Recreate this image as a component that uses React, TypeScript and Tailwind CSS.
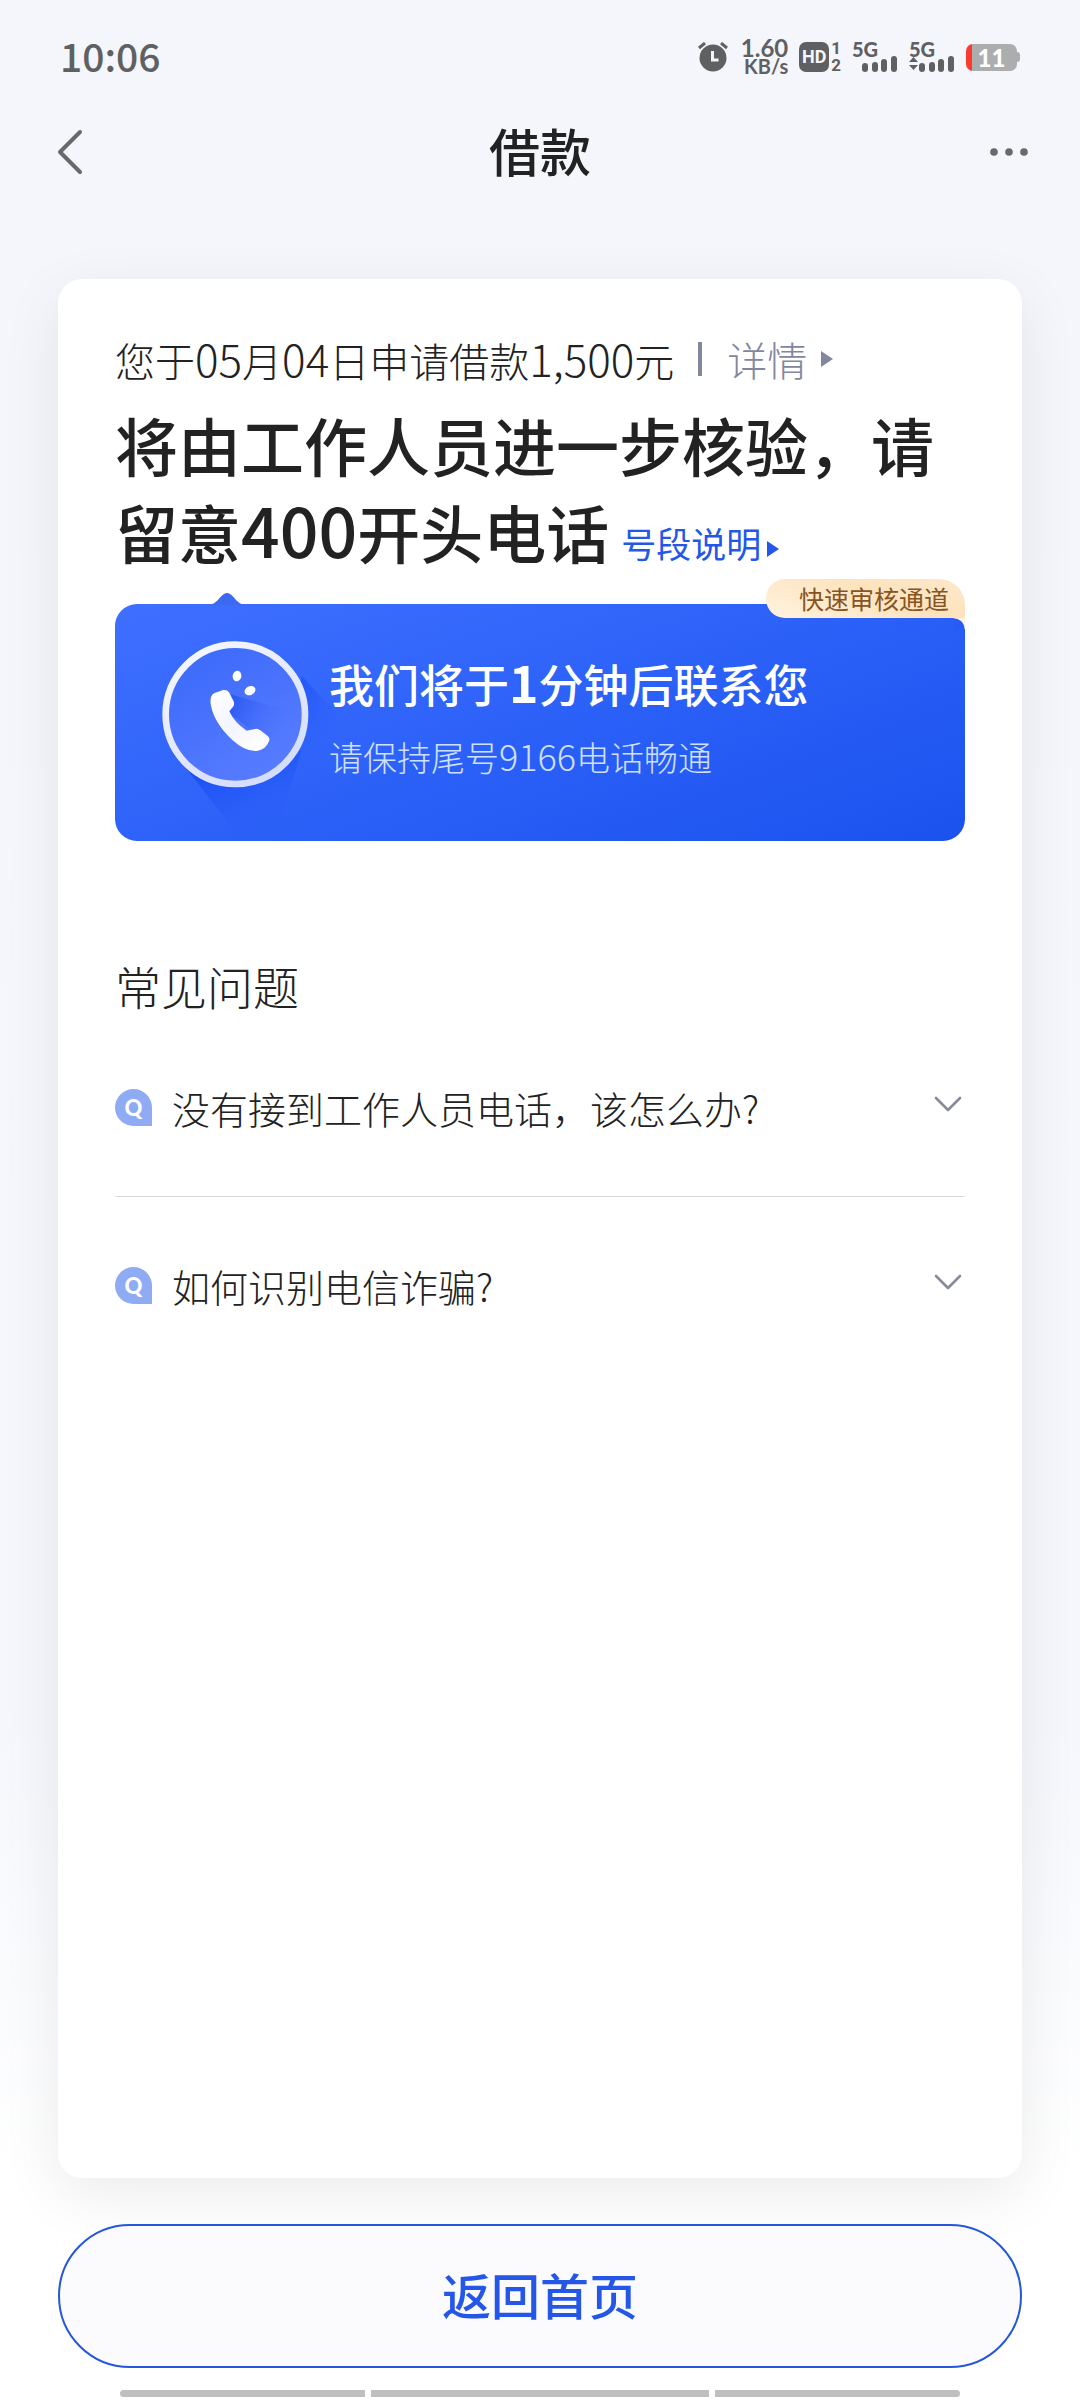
import React, { useState } from 'react';

const questions = [
  { id: 'no-call', title: '没有接到工作人员电话，该怎么办?' },
  { id: 'fraud', title: '如何识别电信诈骗?' },
];

function AlarmIcon() {
  return (
    <svg className="w-[30px] h-[30px] shrink-0" viewBox="0 0 30 30" fill="none">
      <circle cx="15" cy="16" r="13.500" fill="#5f6062" />
      <path d="M1 6 L7 1 M29 6 L23 1" stroke="#5f6062" strokeWidth="3" />
      <path d="M14.500 9 V18 H20.500" stroke="#f5f6fb" strokeWidth="3" />
    </svg>
  );
}

function HdIcon() {
  return (
    <span className="flex items-center gap-[2px]">
      <span className="flex w-[30px] h-[30px] items-center justify-center rounded-[7px] bg-[#5f6062] font-[Roboto] text-[18px] leading-[30px] font-bold text-[#f5f6fb]">
        HD
      </span>
      <span className="flex flex-col font-[Roboto] text-[17px] leading-[17px] font-bold">
        <span>1</span>
        <span>2</span>
      </span>
    </span>
  );
}

function Signal({ active }: { active?: boolean }) {
  return (
    <span className="relative h-[32px] w-[46px]">
      <span className="absolute left-0 top-0 font-[Lato] text-[20px] leading-[17px] font-black">5G</span>
      <svg className="absolute inset-0 w-[46px] h-[32px]" viewBox="0 0 46 32" fill="currentColor">
        {active && <path d="M0 21 L4.500 16 L9 21 Z M0 24 L4.500 29 L9 24 Z" />}
        <rect x="10" y="22" width="6" height="9" rx="3" />
        <rect x="20" y="21" width="6" height="10" rx="3" />
        <rect x="29" y="18" width="6" height="13" rx="3" />
        <rect x="39" y="15" width="6" height="16" rx="3" />
      </svg>
    </span>
  );
}

function Battery() {
  return (
    <span className="flex items-center">
      <span className="flex h-[27px] w-[51px] items-center justify-center rounded-[7px] bg-[linear-gradient(90deg,#fb3b2f_6px,#acadaf_6px)] font-[Lato] text-[24px] leading-[27px] font-black text-white">
        11
      </span>
      <span className="h-[10px] w-[3px] rounded-r-[3px] bg-[#acadaf]" />
    </span>
  );
}

function StatusBar() {
  return (
    <div className="flex h-[114px] items-center justify-between px-[60px] text-[#5f6062]">
      <span className="pb-[4px] text-[39px] font-medium">10:06</span>
      <div className="flex items-center gap-[11px]">
        <AlarmIcon />
        <span className="ml-[2px] flex flex-col items-end font-[Lato] text-[24px] leading-[19px] font-bold">
          <span>1.60</span>
          <span className="text-[20px]">KB/s</span>
        </span>
        <HdIcon />
        <Signal />
        <Signal active />
        <Battery />
      </div>
    </div>
  );
}

function Caret() {
  return (
    <svg className="inline-block w-[12px] h-[16px]" viewBox="0 0 12 16" fill="currentColor">
      <path d="M0 0 L12 8 L0 16 Z" />
    </svg>
  );
}

function PhoneBadge() {
  return (
    <svg className="absolute left-0 top-0 h-[237px] w-[280px]" viewBox="0 0 840 711" fill="none">
      <defs>
        <linearGradient id="shade" x1="330" y1="440" x2="450" y2="700" gradientUnits="userSpaceOnUse">
          <stop stopColor="#1547f5" stopOpacity="0.9" />
          <stop offset="1" stopColor="#2a5ff6" stopOpacity="0" />
        </linearGradient>
        <linearGradient id="shadeRight" x1="540" y1="260" x2="690" y2="400" gradientUnits="userSpaceOnUse">
          <stop stopColor="#1f52f5" stopOpacity="0.7" />
          <stop offset="1" stopColor="#2f63fa" stopOpacity="0" />
        </linearGradient>
        <linearGradient id="face" x1="250" y1="150" x2="480" y2="520" gradientUnits="userSpaceOnUse">
          <stop stopColor="#3d6bfb" />
          <stop offset="1" stopColor="#587cff" />
        </linearGradient>
        <linearGradient id="ring" x1="250" y1="130" x2="480" y2="540" gradientUnits="userSpaceOnUse">
          <stop stopColor="#f4f6ff" />
          <stop offset="1" stopColor="#d3dbfd" />
        </linearGradient>
        <linearGradient id="castShadow" x1="350" y1="280" x2="520" y2="360" gradientUnits="userSpaceOnUse">
          <stop stopColor="#2c58f0" />
          <stop offset="1" stopColor="#4d75ff" stopOpacity="0" />
        </linearGradient>
        <linearGradient id="handset" x1="300" y1="260" x2="440" y2="440" gradientUnits="userSpaceOnUse">
          <stop stopColor="#ffffff" />
          <stop offset="0.500" stopColor="#f3f5ff" />
          <stop offset="1" stopColor="#ffffff" />
        </linearGradient>
      </defs>
      <path d="M215 495 L375 700 L480 700 L560 440 Z" fill="url(#shade)" />
      <path d="M560 215 L720 390 L640 480 L520 460 Z" fill="url(#shadeRight)" />
      <circle cx="361" cy="331" r="209" fill="url(#face)" stroke="url(#ring)" strokeWidth="20" />
      <path d="M335 268 L540 325 L520 400 L462 405 L410 378 L345 330 Z" fill="url(#castShadow)" />
      <path
        d="M297 268 L325 258 Q336 256 342 265 L356 292 Q360 302 353 310 L343 322 Q358 356 395 380 L420 375 Q428 373 436 379 L458 396 Q466 402 462 412 Q452 437 426 441 Q392 444 352 408 Q296 356 287 300 Q284 275 297 268 Z"
        fill="url(#handset)"
      />
      <ellipse cx="366" cy="216" rx="13" ry="16" transform="rotate(12 366 216)" fill="#fff" />
      <ellipse cx="405" cy="260" rx="17" ry="13" transform="rotate(-28 405 260)" fill="#fff" />
    </svg>
  );
}

function CallBanner() {
  return (
    <section className="relative mt-[30px] h-[237px] rounded-[22px] bg-[linear-gradient(160deg,#3f6fff_0%,#2c61f8_50%,#1b52ee_100%)]">
      <svg className="absolute -top-[11px] left-[94px] w-[36px] h-[12px]" viewBox="0 0 36 12" fill="#3b69f2">
        <path d="M0 12 C8 11 11 3 15 1 Q18 -1 21 1 C25 3 28 11 36 12 Z" />
      </svg>
      <PhoneBadge />
      {/* cream block hides the banner's own rounded corner, the tail below it draws the smaller one */}
      <div className="absolute right-0 -top-[25px]">
        <div className="h-[39px] rounded-l-[19px] rounded-tr-[26px] bg-[linear-gradient(20deg,#fff3e0,#fde3bd_60%,#fde8ca)] pl-[33px] pr-[16px] text-[25px] leading-[38px] text-[#865523]">
          快速审核通道
        </div>
        <div className="ml-auto h-[11px] w-[11px] bg-[radial-gradient(circle_at_0_100%,#265cf5_10px,#fdf0dd_11px)]" />
      </div>
      <div className="relative pl-[214px] pt-[42px] text-white">
        <h2 className="text-[45px] leading-[70px] font-medium">
          我们将于<span className="text-[50px] font-bold">1</span>分钟后联系您
        </h2>
        <p className="mt-[11px] text-[34px] leading-[50px] font-light text-[#cfe0ff]">
          请保持尾号<span className="text-[36px]">9166</span>电话畅通
        </p>
      </div>
    </section>
  );
}

function Question({ title }: { title: string }) {
  const [open, setOpen] = useState(false);

  return (
    <li className="border-b border-[#dadbdd] last:border-0">
      <button
        type="button"
        aria-expanded={open}
        onClick={() => setOpen(!open)}
        className="flex h-[177px] w-full items-center text-left"
      >
        <span className="flex h-[37px] w-[37px] items-center justify-center rounded-full rounded-br-none bg-[#8eabf4] font-[Lato] text-[22px] leading-[37px] font-black text-white">
          Q
        </span>
        <span className="ml-[20px] flex-1 text-[38px] leading-[56px] font-light">{title}</span>
        <svg className="mr-[3px] mb-[8px] w-[28px] h-[16px]" viewBox="0 0 28 16" fill="none">
          <path d="M2 2 L14 14 L26 2" stroke="#878a98" strokeWidth="2.600" strokeLinecap="round" strokeLinejoin="round" />
        </svg>
      </button>
    </li>
  );
}

export default function App() {
  return (
    <div className="flex min-h-screen flex-col bg-[linear-gradient(180deg,#f4f6fb_0%,#f5f7fc_72%,#ffffff_91%)] font-['Noto_Sans_CJK_SC',sans-serif] text-[#222222]">
      <StatusBar />

      <header className="flex h-[76px] items-center justify-between pl-[56px] pr-[50px]">
        <button type="button" aria-label="返回" className="w-[54px]">
          <svg className="w-[28px] h-[46px]" viewBox="0 0 28 46" fill="none">
            <path d="M24 3 L4 23 L24 43" stroke="#68696b" strokeWidth="4" strokeLinecap="round" strokeLinejoin="round" />
          </svg>
        </button>
        <h1 className="pb-[3px] text-[51px] leading-[73px] font-medium">借款</h1>
        <button type="button" aria-label="更多" className="flex w-[60px] justify-end">
          <svg className="w-[40px] h-[8px]" viewBox="0 0 40 8" fill="#68696b">
            <circle cx="4" cy="4" r="3.800" />
            <circle cx="19" cy="4" r="3.800" />
            <circle cx="34" cy="4" r="3.800" />
          </svg>
        </button>
      </header>

      <main className="mx-[58px] mt-[89px] flex-1 rounded-[24px] bg-white px-[57px] pt-[49px] shadow-[0_16px_60px_rgba(0,0,0,0.08)]">
        <p className="flex items-center text-[40px] leading-[60px] font-light">
          <span>
            您于<span className="text-[44px]">05</span>月<span className="text-[44px]">04</span>日申请借款
            <span className="text-[44px]">1,500</span>元
          </span>
          <span className="ml-[24px] h-[34px] w-[4px] bg-[#83879d]" />
          <a href="#detail" className="ml-[25px] flex items-center gap-[14px] text-[#83879d]">
            详情
            <Caret />
          </a>
        </p>
        <h2 className="mt-[10px] text-[63px] leading-[87px] font-medium">
          将由工作人员进一步核验，请留意<span className="text-[68px] leading-[80px]">400</span>开头电话
          <a href="#numbers" className="ml-[12px] text-[35px] leading-[50px] font-normal text-[#2457e8]">
            号段说明
            <span className="ml-[6px]">
              <Caret />
            </span>
          </a>
        </h2>

        <CallBanner />

        <h3 className="mt-[110px] text-[46px] leading-[68px] font-light">常见问题</h3>
        <ul>
          {questions.map((q) => (
            <Question key={q.id} title={q.title} />
          ))}
        </ul>
      </main>

      <footer className="mx-[58px] mt-[46px]">
        <button
          type="button"
          className="h-[144px] w-full rounded-full border-2 border-[#2457dc] bg-[#fbfbfe] pb-[5px] text-[49px] font-medium text-[#2457e8]"
        >
          返回首页
        </button>
        <div className="mx-[62px] mt-[22px] mb-[3px] flex h-[7px] gap-[6px]">
          <span className="flex-[245] rounded-l-full bg-[#bfbfbf]" />
          <span className="flex-[338] bg-[#bfbfbf]" />
          <span className="flex-[245] rounded-r-full bg-[#bfbfbf]" />
        </div>
      </footer>
    </div>
  );
}
